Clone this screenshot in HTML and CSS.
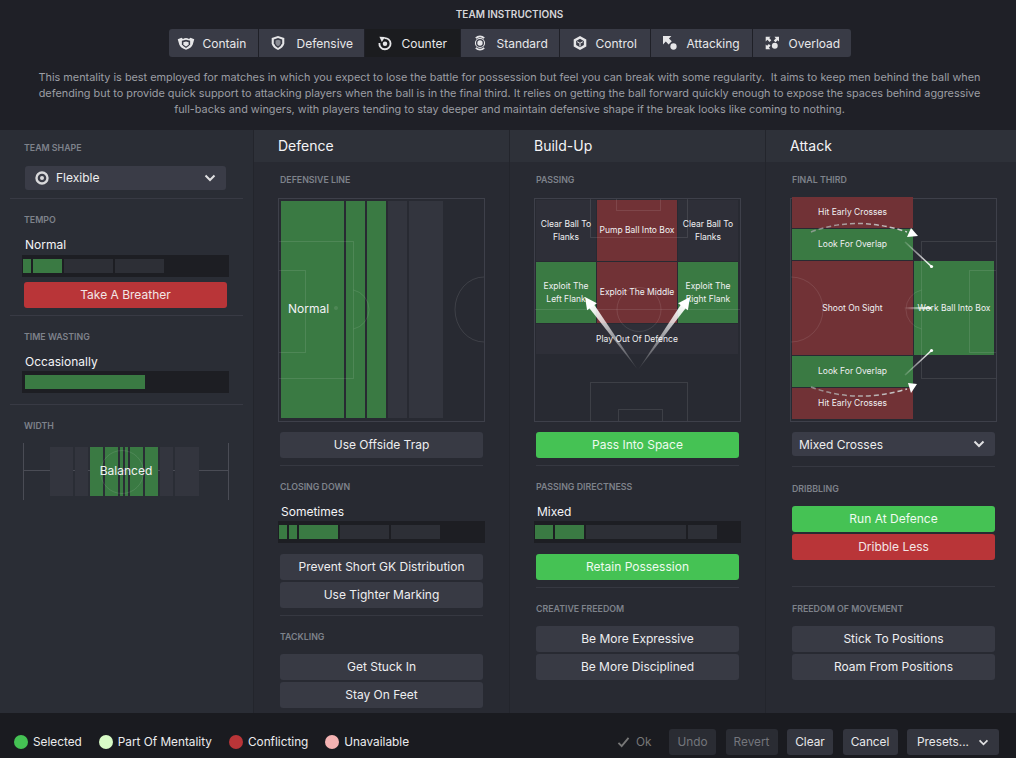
FILE: index.html
```html
<!DOCTYPE html>
<html lang="en">
<head>
<meta charset="utf-8">
<title>Team Instructions</title>
<link rel="stylesheet" href="styles.css">
</head>
<body>
<div class="app">
  <header class="top">
    <div class="title">TEAM INSTRUCTIONS</div>
    <nav class="tabs">
      <div class="tab w1"><svg class="ic wideic" viewBox="0 0 24 20"><path d="M1 5l5-2 2 1.500a8 8 0 0 1 8 0L18 3l5 2-2 7q-2 5-9 7-7-2-9-7z" fill="#e6e6e8"/><path d="M12 5.500l5.500 1.500v4.500q-1.500 3-5.500 5-4-2-5.500-5V7z" fill="#393b46"/><path d="M12 8l3.500 1v2.500q-1 2-3.500 3-2.500-1-3.500-3V9z" fill="#e6e6e8"/></svg>Contain</div>
      <div class="tab w2"><svg class="ic" viewBox="0 0 20 20"><path d="M10 0l9 3v8q-2 6-9 9-7-3-9-9V3z" fill="#e6e6e8"/><path d="M10 3l6 2v5.500q-1.500 4.500-6 6.500-4.500-2-6-6.500V5z" fill="#393b46"/><path d="M10 5.500l3.500 1v3.800q-1 3.200-3.500 4.500-2.500-1.300-3.500-4.500V6.500z" fill="#8a8c94"/></svg>Defensive</div>
      <div class="tab w3 on"><svg class="ic" viewBox="0 0 20 20"><path d="M2 1l8 .5-4.500 7z" fill="#e6e6e8"/><path d="M9 3a8 8 0 1 1-7 7" fill="none" stroke="#e6e6e8" stroke-width="2.600"/><circle cx="10" cy="11" r="3.200" fill="#e6e6e8"/></svg>Counter</div>
      <div class="tab w4"><svg class="ic" viewBox="0 0 20 20"><path d="M4 3a9 9 0 0 1 12 0M16 17a9 9 0 0 1-12 0" fill="none" stroke="#e6e6e8" stroke-width="2.600"/><circle cx="10" cy="10" r="6.500" fill="none" stroke="#e6e6e8" stroke-width="1.600"/><circle cx="10" cy="10" r="3.800" fill="#e6e6e8"/></svg>Standard</div>
      <div class="tab w5"><svg class="ic" viewBox="0 0 20 20"><path d="M10 0l9 5v10l-9 5-9-5V5z" fill="#e6e6e8"/><path d="M10 4l5.500 3.200v5.600L10 16l-5.500-3.200V7.200z" fill="#393b46"/><path d="M6 8l4 2.500L14 8M10 10.500V15" stroke="#e6e6e8" stroke-width="1.600" fill="none"/></svg>Control</div>
      <div class="tab w6"><svg class="ic" viewBox="0 0 20 20"><path d="M0 0h12L8.500 3.500l4 4-4.500 4.500-4-4L0 12z" fill="#e6e6e8"/><circle cx="15" cy="15" r="4.500" fill="#e6e6e8"/></svg>Attacking</div>
      <div class="tab w7"><svg class="ic" viewBox="0 0 20 20"><path d="M1 1h7L6 3l3 3-2.500 2.500-3-3L1 8zM20 1v7l-2-2-3 3-2.500-2.500 3-3-2-2.500zM1 19v-7l2 2 2.500-2.500L8 14l-2.500 2.500 2 2.500z" fill="#e6e6e8"/><circle cx="14" cy="14" r="4.200" fill="#e6e6e8"/></svg>Overload</div>
    </nav>
    <p class="desc">This mentality is best employed for matches in which you expect to lose the battle for possession but feel you can break with some regularity.&nbsp; It aims to keep men behind the ball when<br>defending but to provide quick support to attacking players when the ball is in the final third. It relies on getting the ball forward quickly enough to expose the spaces behind aggressive<br>full-backs and wingers, with players tending to stay deeper and maintain defensive shape if the break looks like coming to nothing.</p>
  </header>

  <main class="main">
    <aside class="side">
      <section class="sblock b1">
        <h3 class="lab">TEAM SHAPE</h3>
        <div class="select shape"><svg class="target" viewBox="0 0 14 14"><circle cx="7" cy="7" r="5.500" fill="none" stroke="#d8d8da" stroke-width="2.400"/><circle cx="7" cy="7" r="2" fill="#d8d8da"/></svg><span>Flexible</span><svg class="chev" viewBox="0 0 12 8"><path d="M1.500 1.500L6 6l4.500-4.500" fill="none" stroke="#e0e0e2" stroke-width="2"/></svg></div>
      </section>
      <section class="sblock b2">
        <h3 class="lab">TEMPO</h3>
        <div class="val">Normal</div>
        <div class="meter"><i class="g" style="width:8px"></i><i class="g" style="width:29px"></i><i style="width:49px"></i><i style="width:49px"></i></div>
        <div class="btn red">Take A Breather</div>
      </section>
      <section class="sblock b3">
        <h3 class="lab">TIME WASTING</h3>
        <div class="val">Occasionally</div>
        <div class="meter solid"><i class="g" style="width:120px"></i></div>
      </section>
      <section class="sblock last">
        <h3 class="lab">WIDTH</h3>
        <div class="width">
          <div class="wline"></div>
          <div class="wbars"><i style="width:23px"></i><i style="width:13px"></i><i class="g" style="width:13px"></i><i class="g" style="width:13px"></i><i class="g" style="width:3px"></i><i class="g" style="width:3px"></i><i class="g" style="width:13px"></i><i class="g" style="width:13px"></i><i style="width:13px"></i><i style="width:24px"></i></div>
          <div class="wcirc"></div>
          <span class="wtxt">Balanced</span>
        </div>
      </section>
    </aside>

    <section class="col">
      <h2 class="chead">Defence</h2>
      <div class="cbody">
        <h3 class="lab">DEFENSIVE LINE</h3>
        <div class="pitch">
          <div class="dbars"><i class="g" style="width:63px"></i><i class="g" style="width:19px"></i><i class="g" style="width:19px"></i><i style="width:19px"></i><i style="width:34px"></i></div>
          <svg class="marks" viewBox="0 0 205 222"><g fill="none" stroke="#fff" stroke-opacity=".1"><path d="M0 42.500H74.500V179.500H0M0 71.500H26.500V153.500H0M74.500 91a20 20 0 0 1 0 39"/><path d="M205 78a29 32.500 0 0 0 0 65"/></g><circle cx="57" cy="109" r="2" fill="#fff" fill-opacity=".1"/></svg>
          <span class="dtxt">Normal</span>
        </div>
        <div class="btn mt10">Use Offside Trap</div>
        <hr class="rule">
        <h3 class="lab l2">CLOSING DOWN</h3>
        <div class="val v2">Sometimes</div>
        <div class="meter m2"><i class="g" style="width:8px"></i><i class="g" style="width:8px"></i><i class="g" style="width:39px"></i><i style="width:49px"></i><i style="width:49px"></i></div>
        <div class="btn mt11">Prevent Short GK Distribution</div>
        <div class="btn mt2">Use Tighter Marking</div>
        <hr class="rule">
        <h3 class="lab l2">TACKLING</h3>
        <div class="btn mt11">Get Stuck In</div>
        <div class="btn mt2">Stay On Feet</div>
      </div>
    </section>

    <section class="col">
      <h2 class="chead">Build-Up</h2>
      <div class="cbody">
        <h3 class="lab">PASSING</h3>
        <div class="pitch">
          <div class="pgrid">
            <div class="z n">Clear Ball To<br>Flanks</div>
            <div class="z r">Pump Ball Into Box</div>
            <div class="z n">Clear Ball To<br>Flanks</div>
            <div class="z g">Exploit The<br>Left Flank</div>
            <div class="z r">Exploit The Middle</div>
            <div class="z g">Exploit The<br>Right Flank</div>
            <div class="z n wide">Play Out Of Defence</div>
          </div>
          <svg class="marks" viewBox="0 0 205 222">
            <defs>
              <linearGradient id="a1" gradientUnits="userSpaceOnUse" x1="103" y1="171" x2="55" y2="105"><stop offset="0" stop-color="#fff" stop-opacity=".05"/><stop offset="1" stop-color="#fff"/></linearGradient>
              <linearGradient id="a2" gradientUnits="userSpaceOnUse" x1="103" y1="171" x2="150" y2="105"><stop offset="0" stop-color="#fff" stop-opacity=".05"/><stop offset="1" stop-color="#fff"/></linearGradient>
            </defs>
            <g fill="none" stroke="#fff" stroke-opacity=".1"><path d="M55.500 0V38.500H152.500V0M81.500 0V11.500H125.500V0M0 110.500H205M55.500 222V183.500H152.500V222M83.500 222V210.500H127.500V222"/><circle cx="104" cy="110.500" r="22"/></g>
            <path d="M103 171L53.400 108l5-3.600z" fill="url(#a1)"/><path d="M50 98l11.900 6.200-9.800 7z" fill="#fff"/>
            <path d="M103 171L146.600 104.400l5 3.600z" fill="url(#a2)"/><path d="M155 98l-2.100 13.200-9.800-7z" fill="#fff"/>
          </svg>
        </div>
        <div class="btn on mt10">Pass Into Space</div>
        <hr class="rule">
        <h3 class="lab l2">PASSING DIRECTNESS</h3>
        <div class="val v2">Mixed</div>
        <div class="meter m2"><i class="g" style="width:18px"></i><i class="g" style="width:29px"></i><i style="width:100px"></i><i style="width:29px"></i></div>
        <div class="btn on mt11">Retain Possession</div>
        <hr class="rule">
        <h3 class="lab l2">CREATIVE FREEDOM</h3>
        <div class="btn mt11">Be More Expressive</div>
        <div class="btn mt2">Be More Disciplined</div>
      </div>
    </section>

    <section class="col c3">
      <h2 class="chead">Attack</h2>
      <div class="cbody">
        <h3 class="lab">FINAL THIRD</h3>
        <div class="pitch">
          <div class="agrid">
            <div class="z r a1">Hit Early Crosses</div>
            <div class="z g a2">Look For Overlap</div>
            <div class="z r a3">Shoot On Sight</div>
            <div class="z g a4">Look For Overlap</div>
            <div class="z r a5">Hit Early Crosses</div>
            <div class="z g a6">Work Ball Into Box</div>
          </div>
          <svg class="marks" viewBox="0 0 205 222">
            <defs>
              <linearGradient id="a3" gradientUnits="userSpaceOnUse" x1="113" y1="109" x2="141" y2="109"><stop offset="0" stop-color="#fff" stop-opacity="0"/><stop offset="1" stop-color="#fff"/></linearGradient>
              <linearGradient id="a4" gradientUnits="userSpaceOnUse" x1="20" y1="0" x2="116" y2="0"><stop offset="0" stop-color="#aaa" stop-opacity=".7"/><stop offset="1" stop-color="#ccc"/></linearGradient>
              <linearGradient id="a5" gradientUnits="userSpaceOnUse" x1="114" y1="0" x2="141" y2="0"><stop offset="0" stop-color="#fff" stop-opacity=".15"/><stop offset="1" stop-color="#fff"/></linearGradient>
            </defs>
            <g fill="none" stroke="#fff" stroke-opacity=".1"><path d="M205 42.500H130.500V179.500H205M205 71.500H178.500V153.500H205M130.500 91a20 20 0 0 0 0 39"/><path d="M0 78a32 32.500 0 0 1 0 65"/></g>
            <g fill="none" stroke="url(#a4)" stroke-width="1.500" stroke-dasharray="5 3">
              <path d="M20 33Q65 16 116 33"/><path d="M20 188Q65 205 116 190"/>
            </g>
            <path d="M116 38l11-1-7-8zM117 184l9 1-6 9z" fill="#fff"/>
            <path d="M114 43L141 68M114 176L141 151" fill="none" stroke="url(#a5)" stroke-width="1.600"/>
            <circle cx="140.500" cy="67.500" r="1.600" fill="#fff"/><circle cx="140.500" cy="151.500" r="1.600" fill="#fff"/>
            <path d="M113 108h27v2.200h-27z" fill="url(#a3)"/>
          </svg>
        </div>
        <div class="select cross mt10"><span>Mixed Crosses</span><svg class="chev" viewBox="0 0 12 8"><path d="M1.500 1.500L6 6l4.500-4.500" fill="none" stroke="#e0e0e2" stroke-width="2"/></svg></div>
        <hr class="rule r2">
        <h3 class="lab l3">DRIBBLING</h3>
        <div class="btn on mt11">Run At Defence</div>
        <div class="btn red mt2">Dribble Less</div>
        <hr class="rule r3">
        <h3 class="lab l3">FREEDOM OF MOVEMENT</h3>
        <div class="btn mt11">Stick To Positions</div>
        <div class="btn mt2">Roam From Positions</div>
      </div>
    </section>
  </main>

  <footer class="foot">
    <div class="legend">
      <span class="key"><i class="dot d1"></i>Selected</span>
      <span class="key"><i class="dot d2"></i>Part Of Mentality</span>
      <span class="key"><i class="dot d3"></i>Conflicting</span>
      <span class="key"><i class="dot d4"></i>Unavailable</span>
    </div>
    <div class="actions">
      <span class="ok"><svg class="tick" viewBox="0 0 14 12"><path d="M1.500 6.500L5 10l7.500-9" fill="none" stroke="#777" stroke-width="2"/></svg>Ok</span>
      <span class="fbtn dim w48">Undo</span>
      <span class="fbtn dim w54">Revert</span>
      <span class="fbtn w47">Clear</span>
      <span class="fbtn w56">Cancel</span>
      <span class="fbtn w92">Presets...<svg class="chev fc" viewBox="0 0 12 8"><path d="M1.500 1.500L6 6l4.500-4.500" fill="none" stroke="#e0e0e2" stroke-width="2"/></svg></span>
    </div>
  </footer>
</div>
</body>
</html>
```
FILE: styles.css
```css
* { box-sizing: border-box; }
html, body { margin: 0; padding: 0; }
body { width: 1016px; height: 758px; overflow: hidden; background: #282a33; font-family: Inter, "Noto Sans", "Liberation Sans", sans-serif; color: #f1f1f3; }
h2, h3, p, hr { margin: 0; }
i { display: block; }
.app { display: flex; flex-direction: column; height: 758px; }

.top { height: 130px; background: #1f2027; text-align: center; padding: 8px 0 0 3px; }
.title { font-size: 10px; line-height: 13px; font-weight: 600; color: #d6d6da; }
.tabs { display: flex; justify-content: center; margin-top: 8px; height: 28px; }
.tab { display: flex; align-items: center; background: #393b46; font-size: 12px; color: #e8e8ea; margin-right: 1px; }
.tab:first-child { border-radius: 3px 0 0 3px; }
.tab:last-child { border-radius: 0 3px 3px 0; margin-right: 0; }
.tab.on { background: #1b1c1f; }
.w1 { width: 89px; padding-left: 8px; gap: 8px; }
.w2 { width: 105px; padding-left: 12px; gap: 12px; }
.w3 { width: 95px; padding-left: 13px; gap: 10px; }
.w4 { width: 98px; padding-left: 12px; gap: 10px; }
.w5 { width: 90px; padding-left: 13px; gap: 9px; }
.w6 { width: 101px; padding-left: 12px; gap: 10px; }
.w7 { width: 98px; padding-left: 12px; gap: 10px; }
.ic { width: 14px; height: 16px; flex: none; }
.wideic { width: 18px; }
.desc { font-size: 10.860px; line-height: 16px; color: #9c9ea4; margin-top: 12px; white-space: nowrap; }

.main { flex: 1; display: flex; min-height: 0; overflow: hidden; }
.side { width: 254px; flex: none; background: #2a2d35; border-right: 1px solid #23252c; padding: 0 10px; }
.sblock { border-bottom: 1px solid #383a44; padding: 15px 0 0 14px; }
.b1 { height: 69px; padding-top: 12px; }
.b2 { height: 117px; }
.b3 { height: 89px; }
.last { border-bottom: 0; }
.lab { font-size: 8.800px; line-height: 12px; font-weight: 600; color: #7e828b; }
.val { font-size: 12px; line-height: 17px; color: #f4f4f6; margin-top: 10px; padding-left: 1px; }
.b2 .meter { margin-top: 2px; }
.select { display: flex; align-items: center; background: #3a3c47; border-radius: 3px; height: 24px; font-size: 12px; color: #eee; }
.shape { margin: 12px 3px 0 1px; padding: 0 0 1px 10px; width: 201px; }
.target { width: 14px; height: 14px; margin-right: 7px; }
.chev { width: 12px; height: 8px; margin-left: auto; margin-right: 10px; }
.meter { display: flex; gap: 2px; background: #1d1e23; height: 22px; width: 207px; margin-left: -2px; padding: 4px 1px; margin-top: 1px; }
.meter i { height: 14px; background: #2d2f36; }
.meter i.g { background: #3a7a43; }
.meter.solid { padding-left: 3px; }
.btn { height: 26px; border-radius: 3px; background: #383a44; text-align: center; font-size: 12px; line-height: 26px; color: #eeeef0; }
.btn.red { background: #b93538; color: #f3e6e6; }
.btn.on { background: #45c254; color: #eefbef; }
.sblock .btn { width: 203px; margin-top: 5px; }
.width { position: relative; height: 57px; width: 206px; margin-top: 11px; margin-left: -1px; border-left: 1px solid #4a4c55; border-right: 1px solid #4a4c55; }
.wline { position: absolute; left: 0; right: 0; top: 27px; height: 1px; background: #4a4c55; }
.wbars { position: absolute; left: 26px; top: 4px; display: flex; gap: 2px; height: 49px; }
.wbars i { background: #33353e; }
.wbars i.g { background: #3a7a43; }
.wcirc { position: absolute; left: 76px; top: 7px; width: 44px; height: 44px; border-radius: 50%; border: 1px solid rgba(255,255,255,.1); }
.wtxt { position: absolute; left: 0; right: 0; top: 19px; text-align: center; font-size: 12px; line-height: 17px; }

.col { width: 256px; flex: none; background: #282a32; border-right: 1px solid #23252c; }
.col.c3 { width: 250px; border-right: 0; }
.chead { height: 32px; background: #2e3139; font-size: 14px; font-weight: 400; line-height: 31px; padding-left: 24px; color: #f4f4f6; }
.cbody { padding: 12px 27px 0 26px; }
.c3 .cbody { padding-right: 21px; }
.pitch { position: relative; width: 207px; height: 224px; border: 1px solid #3e404a; margin: 12px 0 0 -2px; }
.marks { position: absolute; left: 0; top: 0; width: 205px; height: 222px; }
.dbars { position: absolute; left: 2px; top: 2px; bottom: 3px; display: flex; gap: 2px; }
.dbars i { background: #33353e; height: 100%; }
.dbars i.g { background: #3a7a43; }
.dtxt { position: absolute; left: 9px; top: 101px; font-size: 12px; line-height: 17px; }
.z { display: flex; align-items: center; justify-content: center; text-align: center; font-size: 8.500px; line-height: 13px; color: #f0f0f2; }
.z.n { background: rgba(56,58,68,.35); }
.z.r { background: #713236; }
.z.g { background: #3a7a43; }
.pgrid { position: absolute; left: 1px; top: 1px; width: 203px; display: grid; grid-template-columns: 60px 80px 60px; column-gap: 1px; row-gap: 1px; grid-template-rows: 61px 61px 30px; }
.wide { grid-column: 1 / 4; }
.agrid { position: absolute; left: 1px; top: -2px; width: 202px; height: 222px; display: grid; grid-template-columns: 121px 80px; column-gap: 1px; grid-template-rows: 31px 31px 94px 31px 31px; row-gap: 1px; }
.a1 { grid-area: 1 / 1; } .a2 { grid-area: 2 / 1; } .a3 { grid-area: 3 / 1; } .a4 { grid-area: 4 / 1; } .a5 { grid-area: 5 / 1; }
.a6 { grid-area: 3 / 2; }
.mt10 { margin-top: 10px; } .mt11 { margin-top: 11px; } .mt2 { margin-top: 2px; }
.col .btn, .cross { width: 203px; }
.rule { border: 0; height: 1px; background: #363841; width: 203px; margin-top: 7px; }
.r2 { margin-top: 10px; }
.r3 { margin-top: 26px; }
.l2 { margin-top: 15px; }
.l3 { margin-top: 16px; }
.v2 { margin-top: 10px; }
.m2 { width: 207px; }
.cross { padding-left: 7px; height: 24px; }

.foot { height: 45px; background: #1a1b20; display: flex; justify-content: space-between; padding: 16px 17px 3px 14px; align-items: center; }
.legend { display: flex; gap: 17px; font-size: 11.800px; color: #ececee; }
.key { display: flex; align-items: center; gap: 5px; }
.dot { width: 14px; height: 14px; border-radius: 50%; }
.d1 { background: #45c254; } .d2 { background: #d8fbc6; } .d3 { background: #b93538; } .d4 { background: #f4b3b3; }
.actions { display: flex; align-items: center; gap: 9.500px; font-size: 11.800px; }
.ok { display: flex; align-items: center; gap: 6px; color: #777; margin-right: 8px; }
.tick { width: 13px; height: 11px; }
.fbtn { height: 26px; border-radius: 3px; background: #33353e; color: #e8e8ea; display: flex; align-items: center; justify-content: center; }
.fbtn.dim { color: #74767c; background: #2a2c33; }
.w48 { width: 47px; } .w54 { width: 52px; } .w47 { width: 46px; } .w56 { width: 55px; } .w92 { width: 92px; }
.fc { margin-left: 9px; margin-right: 0; width: 11px; height: 7px; }
```
